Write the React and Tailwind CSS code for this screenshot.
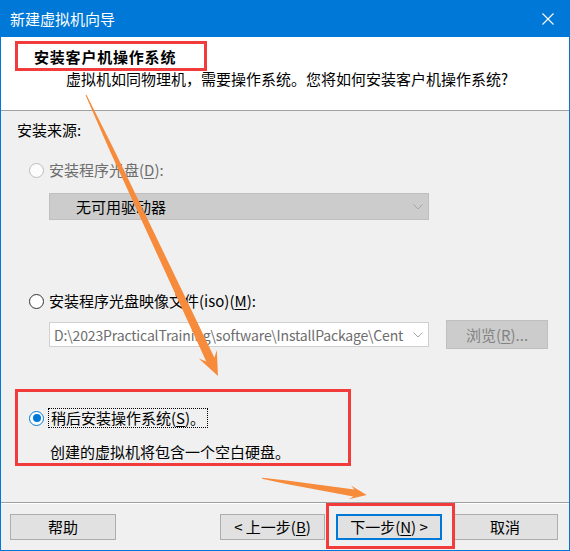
import React from 'react';

function Chevron() {
  return (
    <svg width="10" height="6" viewBox="0 0 10 6" className="shrink-0">
      <polyline points="0.5,0.5 5,5 9.5,0.5" fill="none" stroke="#a6a6a6" strokeWidth="1" />
    </svg>
  );
}

function Radio({ state }) {
  if (state === 'checked') {
    return (
      <span className="w-[15px] h-[15px] rounded-full border border-[#0078d7] bg-white flex items-center justify-center shrink-0">
        <span className="w-[8px] h-[8px] rounded-full bg-[#0078d7]" />
      </span>
    );
  }
  if (state === 'disabled') {
    return <span className="w-[15px] h-[15px] rounded-full border border-[#bcbcbc] bg-[#fcfcfc] shrink-0" />;
  }
  return <span className="w-[15px] h-[15px] rounded-full border border-[#333333] bg-white shrink-0" />;
}

function Btn({ children, primary, className = '', width = 'w-[106px]' }) {
  return (
    <button
      className={`${width} h-[26px] bg-[#e1e1e1] flex items-center justify-center leading-[20px] ${
        primary ? 'border-2 border-[#0078d7]' : 'border border-[#adadad]'
      } ${className}`}
    >
      {children}
    </button>
  );
}

function Acc({ children }) {
  return <span className="underline underline-offset-2">{children}</span>;
}

export default function App() {
  return (
    <div className="relative w-[570px] h-[551px] overflow-hidden font-['Noto_Sans_CJK_SC','Noto_Sans',sans-serif] text-[15px] leading-[20px] text-black">
      <div className="w-[570px] h-[551px] bg-[#f0f0f0] border-x border-b border-[#0078d7]">
        {/* title bar */}
        <div className="h-[37px] bg-[#0078d7] flex items-center justify-between pl-[9px] pr-[15px] text-white">
          <span>新建虚拟机向导</span>
          <svg width="12" height="12" viewBox="0 0 12 12">
            <path d="M0.5 0.5 L11.5 11.5 M11.5 0.5 L0.5 11.5" stroke="#ffffff" strokeWidth="1.1" fill="none" />
          </svg>
        </div>

        {/* header */}
        <div className="h-[74px] bg-white border-b border-[#a0a0a0]">
          <div className="pt-[10px] pl-[33px] font-bold tracking-[0.8px]">安装客户机操作系统</div>
          <div className="mt-[2px] pl-[65px]">虚拟机如同物理机，需要操作系统。您将如何安装客户机操作系统?</div>
        </div>

        {/* body */}
        <div className="h-[391px] pt-[9px]">
          <div className="pl-[16px]">安装来源:</div>

          <div className="mt-[20px] ml-[28px] h-[20px] flex items-center gap-[5px] text-[#6d6d6d]">
            <Radio state="disabled" />
            <span>安装程序光盘(<Acc>D</Acc>):</span>
          </div>
          <div className="mt-[13px] ml-[48px] w-[380px] h-[27px] bg-[#cccccc] border border-[#bfbfbf] flex items-center pl-[26px] pr-[5px]">
            <span className="flex-1">无可用驱动器</span>
            <Chevron />
          </div>

          <div className="mt-[71px] ml-[28px] h-[20px] flex items-center gap-[5px]">
            <Radio />
            <span>安装程序光盘映像文件(iso)(<Acc>M</Acc>):</span>
          </div>
          <div className="mt-[9px] ml-[48px] h-[29px] flex items-center gap-[17px]">
            <div className="w-[380px] h-[25px] bg-white border border-[#d0d0d0] flex items-center pl-[4px] pr-[5px]">
              <span className="w-[352px] whitespace-nowrap text-[14px] tracking-[-0.15px] text-[#6d6d6d]">
                D:\2023PracticalTraining\software\InstallPackage\Cent
              </span>
              <span className="flex-1" />
              <Chevron />
            </div>
            <div className="w-[102px] h-[29px] bg-[#cccccc] border border-[#bfbfbf] text-[#838383] flex items-center justify-center">
              浏览(<Acc>R</Acc>)...
            </div>
          </div>

          <div className="mt-[59px] ml-[28px] h-[20px] flex items-center gap-[4px]">
            <Radio state="checked" />
            <span className="h-[20px] leading-[18px] border border-dotted border-black px-[2px]">
              稍后安装操作系统(<Acc>S</Acc>)。
            </span>
          </div>
          <div className="mt-[14px] ml-[49px]">创建的虚拟机将包含一个空白硬盘。</div>
        </div>

        {/* footer */}
        <div className="border-t border-[#a0a0a0]">
          <div className="border-t border-white pt-[10px] flex pl-[9px] pr-[11px]">
            <Btn>帮助</Btn>
            <div className="flex-1" />
            <Btn width="w-[105px]">&lt; 上一步(<Acc>B</Acc>)</Btn>
            <Btn primary className="ml-[11px]">下一步(<Acc>N</Acc>) &gt;</Btn>
            <Btn className="ml-[10px]">取消</Btn>
          </div>
        </div>
      </div>

      {/* annotations */}
      <div className="absolute left-[15px] top-[41px] w-[192px] h-[30px] border-[3px] border-[#f23c3c]" />
      <div className="absolute left-[15px] top-[389px] w-[336px] h-[77px] border-[3px] border-[#f23c3c]" />
      <div className="absolute left-[326px] top-[503px] w-[129px] h-[46px] border-[3px] border-[#f23c3c]" />

      <svg className="absolute left-0 top-0 pointer-events-none" width="570" height="551" viewBox="0 0 570 551">
        <polygon
          fill="#f68b3c"
          points="86.45,94.79 114.35,150.18 214.42,357.8 216.85,350.03 218,376 198.75,358.53 206.28,361.62 110.37,152.06 85.55,95.21"
        />
        <polygon
          fill="#f68b3c"
          points="262.08,477.81 286.97,480.45 354.41,489.5 351.01,485.42 366.7,495 348.81,499.24 353.31,496.42 286.41,484.01 261.92,478.79"
        />
      </svg>
    </div>
  );
}
